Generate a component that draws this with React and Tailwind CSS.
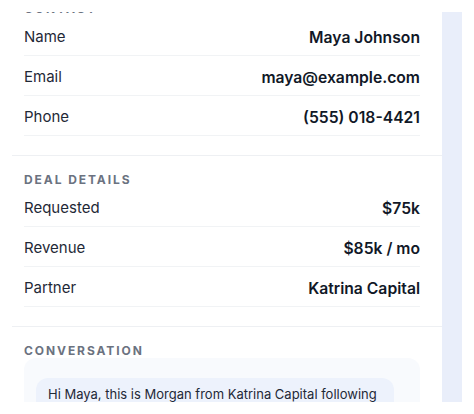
import React from "react";

const contact = [
  { label: "Name", value: "Maya Johnson" },
  { label: "Email", value: "maya@example.com" },
  { label: "Phone", value: "(555) 018-4421" },
];

const deal = [
  { label: "Requested", value: "$75k" },
  { label: "Revenue", value: "$85k / mo" },
  { label: "Partner", value: "Katrina Capital" },
];

function Section({ title, rows }) {
  return (
    <div className="border-b border-[#eef0f3] pl-3 pr-[22px] pt-4 pb-[19px]">
      <div className="text-[12px] leading-[15px] font-bold tracking-[0.16em] text-[#6b7280] uppercase">
        {title}
      </div>
      {rows.map((r) => (
        <div
          key={r.label}
          className="flex h-10 items-center justify-between border-b border-[#f1f3f5] pt-1"
        >
          <span className="text-[15px] text-[#1f2937]">{r.label}</span>
          <span className="text-[15.7px] font-semibold text-[#111827]">{r.value}</span>
        </div>
      ))}
    </div>
  );
}

export default function App() {
  return (
    <div className="h-[414px] bg-white p-3 font-['Inter',sans-serif]">
      <div className="flex h-[390px] overflow-hidden">
        <div className="w-[430px] bg-white">
          <div className="-mt-[27px]">
            <Section title="Contact" rows={contact} />
            <Section title="Deal details" rows={deal} />

            {/* Conversation */}
            <div className="pl-3 pr-[22px] pt-4">
              <div className="text-[12px] leading-[15px] font-bold tracking-[0.16em] text-[#6b7280] uppercase">
                Conversation
              </div>
              <div className="rounded-xl bg-[#f8fafd] px-3 pt-5 pb-4">
                <div className="mr-[14px] rounded-xl bg-[#edf2fc] px-3 pt-[6px] pb-3 text-[13px] leading-5 text-[#1f2937]">
                  Hi Maya, this is Morgan from Katrina Capital following
                  up on your funding request. Do you have a few minutes
                  this week to go over the details?
                </div>
              </div>
            </div>
          </div>
        </div>
        <div className="w-5 bg-[#e9eefa]" />
      </div>
    </div>
  );
}
